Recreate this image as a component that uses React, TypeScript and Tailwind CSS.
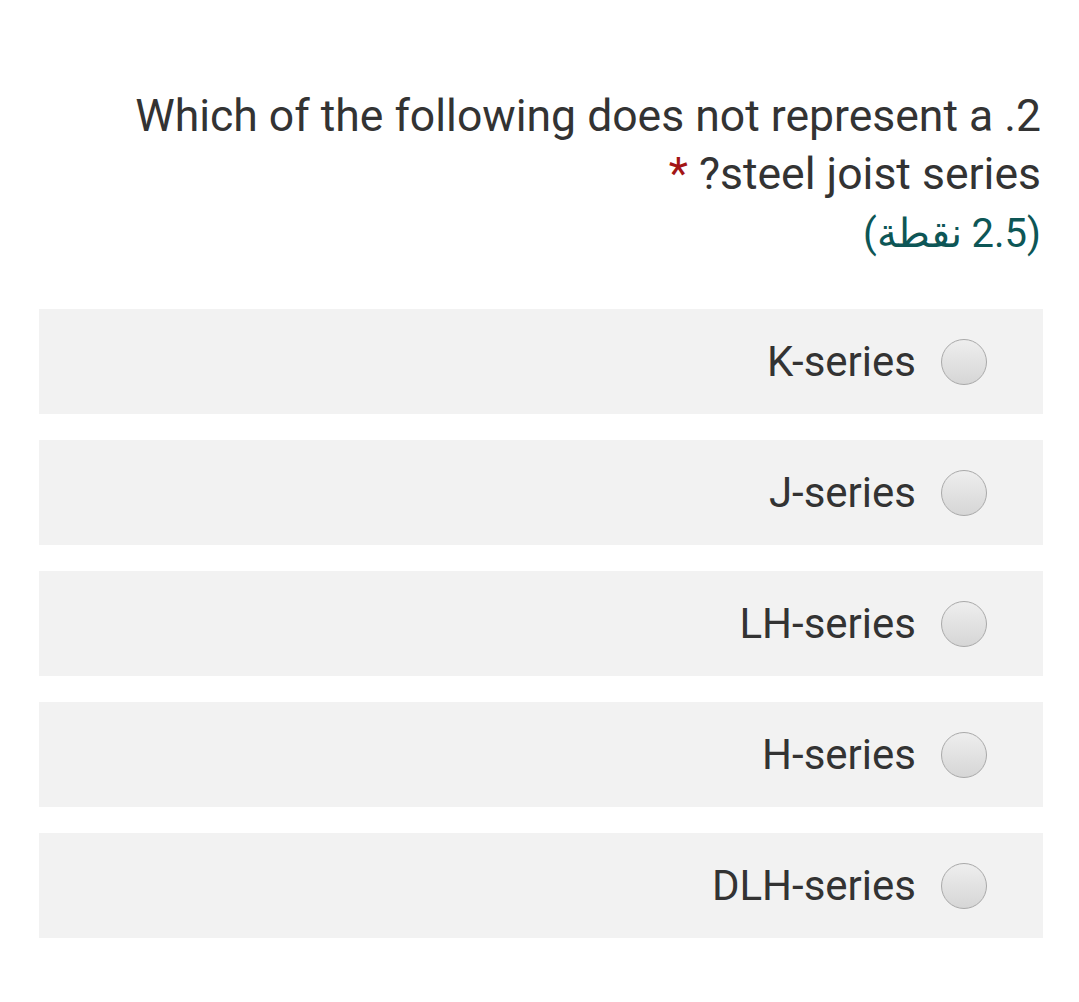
export default function App() {
  const options = ["K-series", "J-series", "LH-series", "H-series", "DLH-series"];

  return (
    <div className="min-h-[1002px] w-[1079px] bg-white font-['Roboto',sans-serif] text-[#333333]">
      <div className="pt-[87px] pr-[38px] text-right text-[44.5px] leading-[58px]">
        <div>Which of the following does not represent a .2</div>
        <div>
          <span className="text-[#a31515]">*</span> ?steel joist series
        </div>
        <div dir="rtl" className="pt-[2px] text-[40px] leading-[58px] text-[#0d5656]">
          (2.5 نقطة)
        </div>
      </div>

      <div className="mt-[46px] flex flex-col gap-[26px] pl-[39px] pr-[36px]">
        {options.map((opt) => (
          <div
            key={opt}
            className="flex h-[105px] items-center justify-end bg-[#f2f2f2] pr-[56px]"
          >
            <span className="text-[42px]">{opt}</span>
            <span className="ml-[25px] h-[46px] w-[46px] rounded-full border border-[#a9a9a9] bg-gradient-to-b from-[#eeeeee] to-[#d6d6d6]" />
          </div>
        ))}
      </div>
    </div>
  );
}
